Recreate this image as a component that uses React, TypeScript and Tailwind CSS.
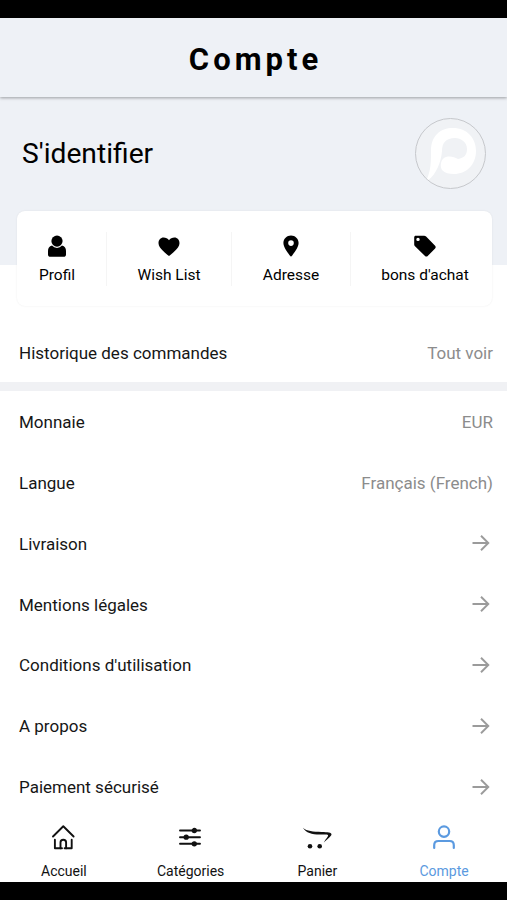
import type { ReactNode } from 'react';
import clsx from 'clsx';

function ProfileIcon() {
  return (
    <svg width="20" height="24" viewBox="0 0 20 24" fill="currentColor">
      <circle cx="10" cy="7.100" r="5.600" />
      <path d="M5 11.600C2.200 12.200 1 14.400 1 17v3.400C1 22 1.900 22.800 3.400 22.800h13.200c1.500 0 2.400-.8 2.400-2.400V17c0-2.600-1.200-4.800-4-5.400a6.600 6.600 0 0 1-10 0z" />
    </svg>
  );
}

function HeartIcon() {
  return (
    <svg width="24" height="24" viewBox="0 0 24 24" fill="currentColor">
      <path d="M12 22C9.800 20.100 1.500 14.300 1.500 9.200c0-3.300 2.200-5.600 5-5.600 2.300 0 4.300 1.100 5.500 2.600 1.200-1.500 3.200-2.600 5.500-2.600 2.800 0 5 2.300 5 5.600C22.500 14.300 14.200 20.100 12 22z" />
    </svg>
  );
}

function PinIcon() {
  return (
    <svg width="24" height="24" viewBox="0 0 24 24" fill="currentColor">
      <path
        fillRule="evenodd"
        d="M12 1.600c-4.200 0-7.600 3.300-7.600 7.500C4.400 14.700 12 22.800 12 22.800s7.600-8.100 7.600-13.700c0-4.200-3.400-7.500-7.600-7.500zm0 10.300a2.800 2.800 0 1 1 0-5.600 2.800 2.800 0 0 1 0 5.600z"
      />
    </svg>
  );
}

function TagIcon() {
  return (
    <svg width="24" height="24" viewBox="0 0 24 24" fill="currentColor">
      <path
        fillRule="evenodd"
        d="M1.200 3.300C1.200 2.300 1.800 1.700 2.800 1.700h8.300c.8 0 1.400.3 2 .8l9 9.200c.8.800.8 1.900 0 2.700l-7.400 7.500c-.8.800-1.900.800-2.700 0l-10-9.600c-.5-.5-.8-1.100-.8-1.900zM5 7.100A1.700 1.700 0 1 0 5 3.700a1.700 1.700 0 0 0 0 3.400z"
      />
    </svg>
  );
}

function HomeIcon() {
  return (
    <svg width="26" height="26" viewBox="0 0 26 26" fill="none" stroke="currentColor" strokeWidth="1.900" strokeLinecap="round" strokeLinejoin="round">
      <path d="M3 12.500 13.300 2.300l10.300 10.200" />
      <path d="M4.900 15.800v8.500h5.600v-5.800a2.800 2.800 0 0 1 5.600 0v5.800h5.600v-8.500" />
      <path d="M10.500 24.300h1.500M14.600 24.300h1.500" />
    </svg>
  );
}

function SlidersIcon() {
  return (
    <svg width="24" height="26" viewBox="0 0 24 26" fill="currentColor" stroke="currentColor" strokeWidth="1.900" strokeLinecap="round">
      <path d="M2 6.500h20M2 13.200h20M2 19.800h20" />
      <circle cx="16.300" cy="6.500" r="1.700" />
      <circle cx="8.200" cy="13.200" r="1.700" />
      <circle cx="16.300" cy="19.800" r="1.700" />
    </svg>
  );
}

function CartIcon() {
  return (
    <svg width="30" height="26" viewBox="0 0 30 26" fill="currentColor">
      <path d="M.9 3.800C5 7.400 11 7.700 19.500 7.900c6.500.2 10 .5 10 2.300 0 1.700-3.200 4-7.700 8.400 2.300-4 4.300-6 4.300-7 0-1.200-3.600-.9-8.300-1C9.600 10.600 4.200 9 .9 3.800z" />
      <circle cx="8" cy="22.200" r="2.300" />
      <circle cx="17.700" cy="22.200" r="2.300" />
    </svg>
  );
}

function AccountIcon() {
  return (
    <svg width="24" height="26" viewBox="0 0 24 26" fill="none" stroke="currentColor" strokeWidth="2.200" strokeLinecap="round">
      <circle cx="12" cy="7.600" r="5.200" />
      <path d="M2.200 24v-2.800c0-2.700 1.500-4.200 4.200-4.200h11.200c2.700 0 4.200 1.500 4.200 4.200V24" />
    </svg>
  );
}

function ArrowIcon() {
  return (
    <svg width="20" height="18" viewBox="0 0 20 18" fill="none" stroke="#9b9b9b" strokeWidth="1.900">
      <path d="M1.500 9h16M10 1.800 17.300 9 10 16.200" />
    </svg>
  );
}

function Logo() {
  return (
    <div className="-mt-0.5 size-[71px] overflow-hidden rounded-full border border-[#c6c8cc] bg-[#f0f2f5]">
      <svg viewBox="1 1 69 69" fill="#fff">
        <path d="M12 61C16 51 16 44 16 33 16 18 25 10 38 10c14 0 23 10 23 23 0 14-10 23-22 23-5 0-9-1-12-4-2.500-4-1-12 4-13 5-1 8 0 12 2 6-1 9-4 9-10 0-7-6-11-12-11-9 0-13 5-13 13-1 12-6 23-13.500 29-1 .5-2 0-1.500-1z" />
      </svg>
    </div>
  );
}

const SHORTCUTS: { label: string; icon: ReactNode; className: string }[] = [
  { label: 'Profil', icon: <ProfileIcon />, className: 'w-[89px] pr-[9px]' },
  { label: 'Wish List', icon: <HeartIcon />, className: 'w-[125px]' },
  { label: 'Adresse', icon: <PinIcon />, className: 'w-[119px]' },
  { label: "bons d'achat", icon: <TagIcon />, className: 'flex-1 pl-[7px]' },
];

const SETTINGS: { label: string; value?: string }[] = [
  { label: 'Monnaie', value: 'EUR' },
  { label: 'Langue', value: 'Français (French)' },
  { label: 'Livraison' },
  { label: 'Mentions légales' },
  { label: "Conditions d'utilisation" },
  { label: 'A propos' },
  { label: 'Paiement sécurisé' },
];

const TABS = [
  { label: 'Accueil', icon: <HomeIcon /> },
  { label: 'Catégories', icon: <SlidersIcon /> },
  { label: 'Panier', icon: <CartIcon /> },
  { label: 'Compte', icon: <AccountIcon />, active: true },
];

function Row({ label, value }: { label: string; value?: string }) {
  return (
    <button className="flex h-[60.800px] w-full shrink-0 items-center justify-between pr-3.5 pl-[19px] text-[17px]">
      <span className="pt-[3px] text-[#161616]">{label}</span>
      {value ? (
        <span className="pt-[3px] text-[#8c8c8c]">{value}</span>
      ) : (
        <span className="pt-px pr-0.5">
          <ArrowIcon />
        </span>
      )}
    </button>
  );
}

export default function App() {
  return (
    <div className="flex h-[900px] w-[507px] flex-col overflow-hidden border-t-[18px] border-b-[18px] border-black bg-white font-['Roboto',sans-serif] text-black">
      {/* Title bar */}
      <header className="z-10 flex h-[79px] shrink-0 items-center justify-center bg-[#eef1f6] pt-1 shadow-[0_1px_3px_rgba(0,0,0,0.350)]">
        <h1 className="pl-1 text-[31px] leading-none font-bold tracking-[4px]">Compte</h1>
      </header>

      {/* Login + shortcuts */}
      <section className="h-[168px] shrink-0 bg-[#eef1f6]">
        <div className="flex h-[114px] items-center justify-between pr-[21px] pl-[22px]">
          <p className="pt-px text-[28.200px]">S'identifier</p>
          <Logo />
        </div>
        <div className="mr-[15px] ml-[17px] flex h-[95px] items-center rounded-lg bg-white shadow-[0_0_2px_rgba(0,0,0,0.080)]">
          {SHORTCUTS.map((item, i) => (
            <button
              key={item.label}
              className={clsx(
                'flex h-[54px] flex-col items-center whitespace-nowrap',
                i > 0 && 'border-l border-[#f5f5f5]',
                item.className,
              )}
            >
              <span className="pt-0.5">{item.icon}</span>
              <span className="mt-[5px] text-[15.500px] leading-6">{item.label}</span>
            </button>
          ))}
        </div>
      </section>

      {/* Orders */}
      <div className="mt-[57px] h-[60px] shrink-0">
        <Row label="Historique des commandes" value="Tout voir" />
      </div>
      <div className="h-[9px] shrink-0 bg-[#f0f1f4]" />

      {/* Settings */}
      <div className="min-h-0 flex-1">
        {SETTINGS.map((item) => (
          <Row key={item.label} {...item} />
        ))}
      </div>

      {/* Tab bar */}
      <nav className="grid h-[64px] shrink-0 grid-cols-4 bg-white">
        {TABS.map((tab) => (
          <button
            key={tab.label}
            className={clsx('flex flex-col items-center justify-end pb-px', tab.active ? 'text-[#5b9ae0]' : 'text-[#111]')}
          >
            {tab.icon}
            <span className="mt-[11px] pl-px text-[14px] leading-5">{tab.label}</span>
          </button>
        ))}
      </nav>
    </div>
  );
}
